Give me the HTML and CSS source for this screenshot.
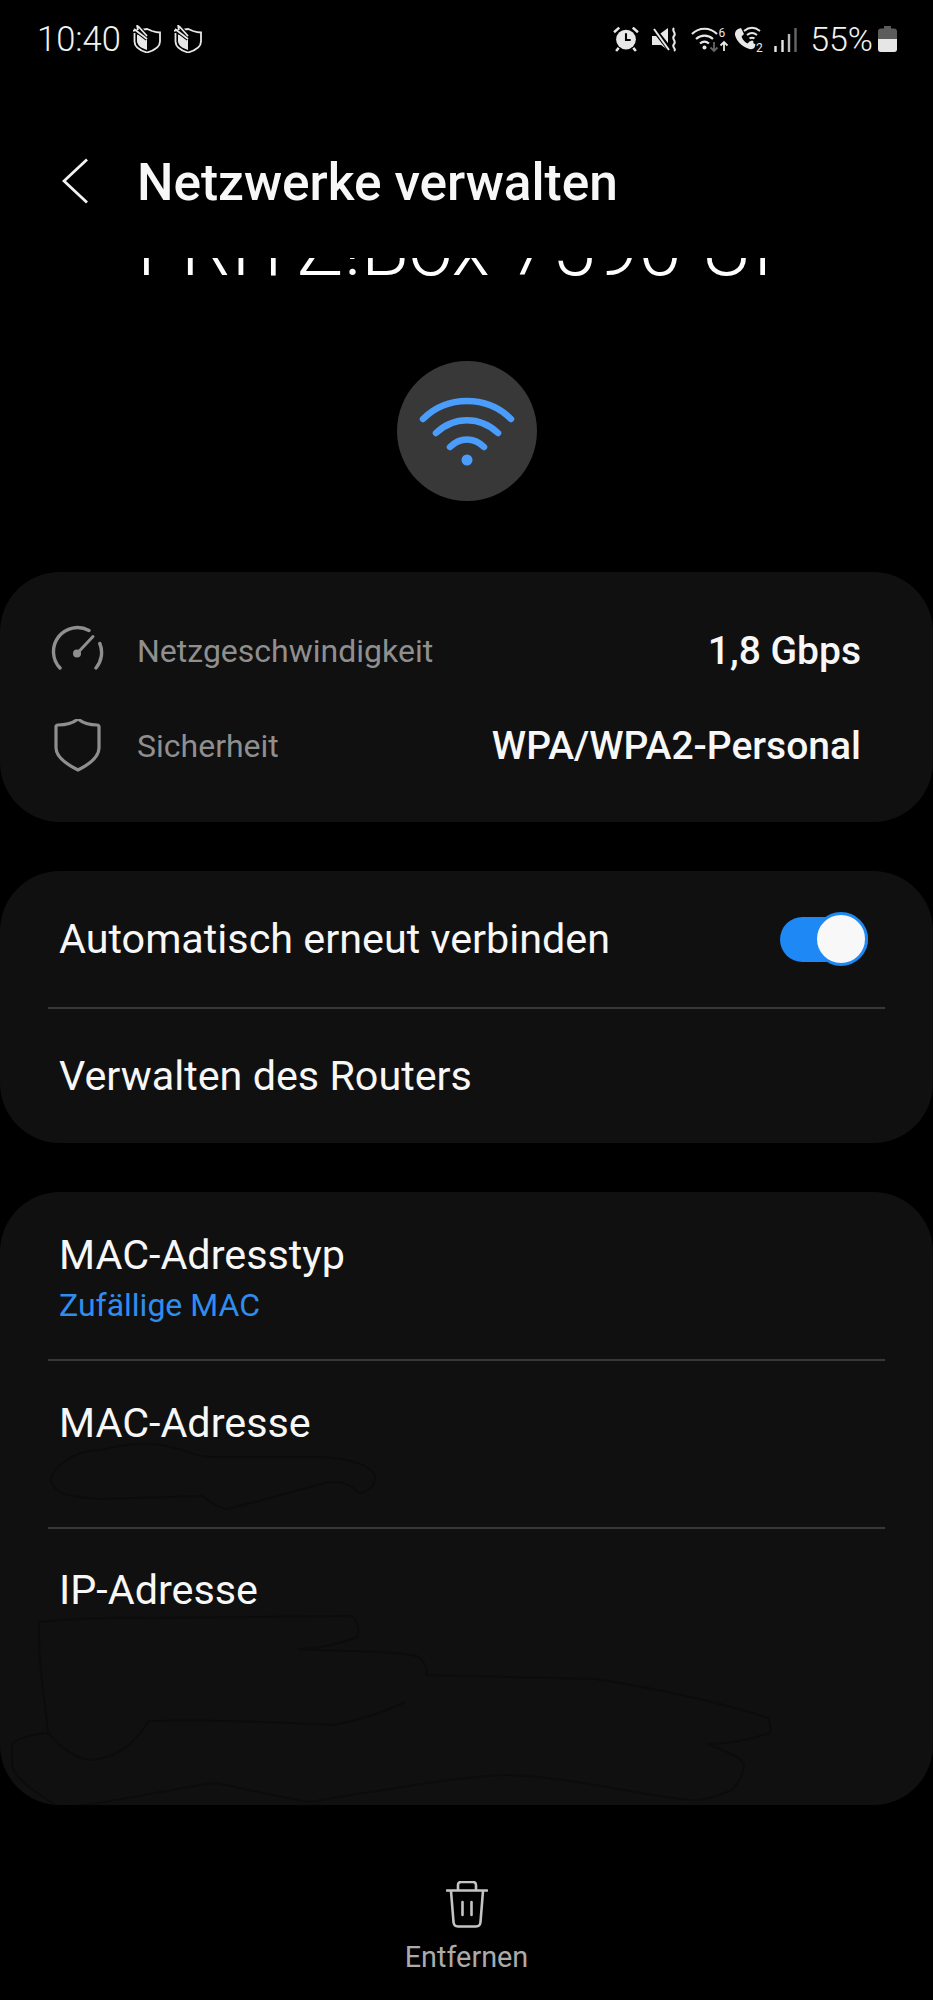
FILE: index.html
```html
<!DOCTYPE html>
<html lang="de">
<head>
<meta charset="utf-8">
<title>Netzwerke verwalten</title>
<link rel="stylesheet" href="styles.css">
</head>
<body>
<div class="phone">
  <header class="status">
    <div class="status-left">
      <span class="clock">10:40</span>
      <svg class="ic-shield" viewBox="0 0 28 28"><use href="#guard"/></svg>
      <svg class="ic-shield" viewBox="0 0 28 28"><use href="#guard"/></svg>
    </div>
    <div class="status-right">
      <svg class="ic-alarm" viewBox="0 0 25 25">
        <circle cx="12.5" cy="13" r="9.5" fill="#e8e8e8"/>
        <path d="M12.5 7v6.500h4.500" fill="none" stroke="#000" stroke-width="2"/>
        <path d="M1 6l5-4.500M24 6l-5-4.500M5.500 21l-2.500 3M19.500 21l2.500 3" stroke="#e8e8e8" stroke-width="2.400" fill="none"/>
      </svg>
      <svg class="ic-mute" viewBox="0 0 26 25">
        <path d="M0 9h5l11-8v22l-7-5H0z" fill="#e8e8e8"/>
        <path d="M1 1l18 23" stroke="#000" stroke-width="5"/>
        <path d="M2 2l15 21" stroke="#e8e8e8" stroke-width="2"/>
        <path d="M22 1c-3 3 3 5 0 8s3 5 0 8 3 5 0 7" fill="none" stroke="#e8e8e8" stroke-width="2"/>
      </svg>
      <svg class="ic-wifi" viewBox="0 0 37 27">
        <path d="M1 8c7-7 18-7 25 0M5 13c5-4.500 12-4.500 17 0M9 17.500c3-2.500 6-2.500 9 0" fill="none" stroke="#e8e8e8" stroke-width="2.200"/>
        <circle cx="13.500" cy="21.500" r="2" fill="#e8e8e8"/>
        <path d="M23 16v9m-3.500-3.500l3.500 3.500 3.500-3.500" fill="none" stroke="#666" stroke-width="1.800"/>
        <text x="27.500" y="11" class="ic-num">6</text>
        <path d="M33 25v-9m-3.500 3.500l3.500-3.500 3.500 3.500" fill="none" stroke="#e8e8e8" stroke-width="1.800"/>
      </svg>
      <svg class="ic-call" viewBox="0 0 32 27">
        <path d="M5 3l3-1 3 6-2.500 2.500c1 3 3 5.500 6 7l2.500-2.500 5.500 3.500-1 3c-1 1.500-3 2-5 1.500C9 21 3.500 15 2 9c-.5-2.500 1-5 3-6z" fill="#e8e8e8"/>
        <path d="M11 5c5-4 11-4 16 0M14 9c3-2.500 7-2.500 10 0M16.500 12.500c1.500-1 3.500-1 5 0" fill="none" stroke="#e8e8e8" stroke-width="2"/>
        <circle cx="19" cy="16" r="1.500" fill="#e8e8e8"/>
        <text x="23" y="25.500" class="ic-num">2</text>
      </svg>
      <svg class="ic-signal" viewBox="0 0 23 25">
        <path d="M1.500 19v6M8.500 13v12" stroke="#e8e8e8" stroke-width="2.400"/>
        <path d="M15 7v18" stroke="#bbb" stroke-width="2.400"/>
        <path d="M21.500 1v24" stroke="#666" stroke-width="2.400"/>
      </svg>
      <span class="battery-pct">55%</span>
      <svg class="ic-battery" viewBox="0 0 19 26">
        <path d="M6 0h7v2.500h3a3 3 0 0 1 3 3V23a3 3 0 0 1-3 3H3a3 3 0 0 1-3-3V5.500a3 3 0 0 1 3-3h3z" fill="#5c5c5c"/>
        <path d="M0 13h19v10a3 3 0 0 1-3 3H3a3 3 0 0 1-3-3z" fill="#e6e6e6"/>
      </svg>
    </div>
  </header>

  <div class="appbar">
    <svg class="back" viewBox="0 0 26 46"><path d="M25 1.500L2 23l23 21.500" fill="none" stroke="#f2f2f2" stroke-width="2.800"/></svg>
    <h1 class="appbar-title">Netzwerke verwalten</h1>
  </div>

  <div class="scroll-edge">
    <div class="network-name">FRITZ!Box 7590 UI</div>
  </div>

  <div class="wifi-badge">
    <svg class="wifi-glyph" viewBox="0 0 96 70">
      <path d="M4 23C28 -1 68 -1 92 23" />
      <path d="M17 37C35 20 61 20 79 37" />
      <path d="M31 51C41 41 55 41 65 51" />
      <circle cx="48" cy="64" r="5.500"/>
    </svg>
  </div>

  <main class="cards">
    <section class="card card-info">
      <div class="info-row">
        <svg class="info-icon" viewBox="-2 0 54 54">
          <path d="M8 44A24 24 0 0 1 37 6.500M47.800 19.500A24 24 0 0 1 44 44" fill="none" stroke="#8f8f8f" stroke-width="3.400" stroke-linecap="round"/>
          <path d="M25 29.500L41 12.500" stroke="#8f8f8f" stroke-width="3" stroke-linecap="round"/>
          <circle cx="25" cy="29.500" r="4" fill="#8f8f8f"/>
        </svg>
        <span class="info-label">Netzgeschwindigkeit</span>
        <span class="info-value">1,8 Gbps</span>
      </div>
      <div class="info-row">
        <svg class="info-icon" viewBox="-1 1 54 54">
          <path d="M27 1c5 4 12 6 19 6 1.500 0 2 .8 2 2v21c0 9-9 16-21 22C15 46 5 39 5 30V9c0-1.200.5-2 2-2 8 0 15-2 20-6z" fill="none" stroke="#8f8f8f" stroke-width="3.200" stroke-linejoin="round"/>
        </svg>
        <span class="info-label">Sicherheit</span>
        <span class="info-value">WPA/WPA2-Personal</span>
      </div>
    </section>

    <section class="card">
      <div class="row row-toggle">
        <span class="row-title">Automatisch erneut verbinden</span>
        <span class="switch"><span class="switch-thumb"></span></span>
      </div>
      <div class="row row-plain">
        <span class="row-title">Verwalten des Routers</span>
      </div>
    </section>

    <section class="card card-details">
      <div class="row row-detail row-first">
        <span class="row-title">MAC-Adresstyp</span>
        <span class="row-sub">Zufällige MAC</span>
      </div>
      <div class="row row-detail row-mac">
        <span class="row-title">MAC-Adresse</span>
      </div>
      <div class="row row-detail row-last">
        <span class="row-title">IP-Adresse</span>
      </div>
      <!-- hand-drawn marker strokes covering the address values -->
      <svg class="scribble" viewBox="0 0 933 613">
        <path d="M51 285C60 268 80 258 101 258 125 252 150 250 167 254 185 258 200 266 214 265L321 265C345 266 372 272 375 285 375 298 362 302 357 300 350 290 335 288 321 292 290 300 250 312 226 317 212 314 206 306 202 304L101 307C85 306 65 304 60 300 53 296 50 290 51 285z"/>
        <path d="M39 430C60 428 100 425 150 426L351 424C358 428 360 440 357 445 340 452 315 457 298 457 340 460 390 458 417 464 425 470 428 478 426 483L595 487C650 495 720 510 768 526 772 535 770 545 768 541 750 548 725 552 708 552 725 560 745 565 744 575 742 585 738 592 732 598 715 605 700 610 690 608 670 606 645 602 625 598 590 592 545 584 506 583 450 585 395 597 357 602L310 610C275 605 240 595 214 591 165 598 105 612 60 616 35 600 12 585 12 571L12 552C20 545 35 542 48 541 44 500 38 470 39 430z"/>
        <path d="M48 541C60 555 75 566 90 568 120 566 135 550 149 529 200 527 270 530 333 533 360 528 385 520 405 510"/>
      </svg>
    </section>
  </main>

  <footer class="actions">
    <svg class="trash" viewBox="0 0 42 47">
      <path d="M1 9.500h40M12 9V4c0-1.800 1-3 3-3h12c2 0 3 1.200 3 3v5M5 10l2.500 31c.2 3 2 4.500 4.500 4.500h18c2.500 0 4.300-1.500 4.500-4.500L37 10M16.500 21v13M25.500 21v13" fill="none" stroke="#c4c4c4" stroke-width="2.600" stroke-linecap="round"/>
    </svg>
    <span class="action-label">Entfernen</span>
  </footer>
</div>

<svg class="defs" width="0" height="0">
  <defs>
    <g id="guard">
      <path d="M8 5l6-1 5 2c3 1 6 1.500 8 1.500v9c0 5-6 9-13 11C7 25.500 1.500 21.500 1.500 16.500V8" fill="none" stroke="#e8e8e8" stroke-width="1.800"/>
      <path d="M14 11v14C9 23.500 4 20.500 4 16V9.500z" fill="#e8e8e8"/>
      <path d="M1 4l13 10M5 1l9 10" fill="none" stroke="#000" stroke-width="4"/>
      <path d="M1 4l13 10M5 1l9 10M0 6l4-1M4 0l1 5" fill="none" stroke="#e8e8e8" stroke-width="1.800"/>
    </g>
  </defs>
</svg>
</body>
</html>
```

FILE: styles.css
```css
* { box-sizing: border-box; }

html, body {
  margin: 0;
  background: #000;
}

body {
  font-family: Roboto, "Noto Sans", sans-serif;
  color: #f7f7f7;
}

.phone {
  width: 933px;
  height: 2000px;
  overflow: hidden;
  display: flex;
  flex-direction: column;
}

.defs { position: absolute; }

/* status bar */
.status {
  height: 80px;
  flex: none;
  display: flex;
  justify-content: space-between;
  align-items: flex-start;
  padding: 24px 36px 0 37px;
}

.status-left,
.status-right {
  display: flex;
  align-items: center;
  height: 30px;
}

.clock {
  font-size: 34.5px;
  font-weight: 300;
  line-height: 30px;
  color: #f2f2f2;
  width: 96px;
}

.ic-shield { width: 28px; height: 28px; margin-right: 13px; }

.ic-alarm { width: 26px; height: 26px; margin-right: 13px; }
.ic-mute { width: 26px; height: 25px; margin-right: 13px; }
.ic-wifi { width: 37px; height: 27px; margin-right: 5px; }
.ic-call { width: 32px; height: 27px; margin-right: 9px; }
.ic-signal { width: 23px; height: 25px; margin-right: 13px; }
.ic-battery { width: 19px; height: 26px; margin-left: 5px; }

.ic-num {
  font-size: 12px;
  fill: #e8e8e8;
  font-family: Roboto, sans-serif;
}

.battery-pct {
  font-size: 34px;
  font-weight: 300;
  line-height: 30px;
  color: #f2f2f2;
}

/* app bar */
.appbar {
  height: 96px;
  flex: none;
  margin-top: 55px;
  display: flex;
  align-items: center;
  padding-left: 62px;
}

.back { width: 26px; height: 46px; margin-right: 49px; margin-bottom: 4px; }

.appbar-title {
  margin: 0;
  font-size: 51.4px;
  font-weight: 500;
  line-height: 56px;
  color: #f7f7f7;
}

/* large title scrolled under the app bar */
.scroll-edge {
  height: 30px;
  flex: none;
  margin-top: 27px;
  overflow: hidden;
  display: flex;
  align-items: flex-end;
  padding-left: 137px;
}

.network-name {
  font-size: 78px;
  font-weight: 300;
  line-height: 76px;
  white-space: nowrap;
  margin-bottom: 1px;
  color: #fff;
}

.wifi-badge {
  width: 140px;
  height: 140px;
  flex: none;
  border-radius: 50%;
  background: #383838;
  align-self: center;
  margin-top: 73px;
  display: flex;
  align-items: center;
  justify-content: center;
}

.wifi-glyph {
  width: 96px;
  height: 70px;
  fill: none;
  stroke: #4a9dfb;
  stroke-width: 6.500;
  stroke-linecap: round;
}

.wifi-glyph circle { fill: #4a9dfb; stroke: none; }

/* cards */
.cards {
  display: flex;
  flex-direction: column;
  gap: 49px;
  margin-top: 71px;
}

.card {
  background: #101010;
  border-radius: 60px;
}

.card-info {
  height: 250px;
  padding: 31px 72px 0 50px;
}

.info-row {
  display: flex;
  align-items: center;
  height: 95px;
}

.info-icon { width: 54px; height: 54px; flex: none; margin-right: 33px; }

.info-label {
  font-size: 32px;
  color: #8f8f8f;
  flex: 1;
}

.info-value {
  font-size: 39px;
  font-weight: 500;
  color: #f7f7f7;
}

.row {
  margin: 0 48px;
  padding: 0 11px;
  border-bottom: 2px solid #383838;
  display: flex;
}

.row:last-child,
.row-last { border-bottom: 0; }

.row-title {
  font-size: 41.3px;
  line-height: 46px;
  color: #f7f7f7;
}

.row-toggle {
  height: 138px;
  align-items: center;
  justify-content: space-between;
  padding-right: 17px;
}

.row-plain {
  height: 134px;
  align-items: center;
}

.switch {
  width: 88px;
  height: 45px;
  border-radius: 23px;
  background: #1e88f5;
  display: flex;
  justify-content: flex-end;
  align-items: center;
}

.switch-thumb {
  width: 54px;
  height: 54px;
  border-radius: 50%;
  background: #f8f8f8;
  border: 3px solid #1e88f5;
  flex: none;
}

.card-details {
  height: 613px;
  position: relative;
}

.row-detail {
  flex-direction: column;
  height: 168px;
  padding-top: 38px;
}

.row-first { height: 169px; padding-top: 40px; }
.row-mac { padding-top: 39px; }

.row-sub {
  font-size: 32px;
  line-height: 36px;
  margin-top: 9px;
  color: #2f8df0;
}

.scribble {
  position: absolute;
  left: 0;
  top: 0;
  width: 933px;
  height: 613px;
  fill: none;
  stroke: #0c0c0c;
  stroke-width: 2;
}

/* bottom action */
.actions {
  display: flex;
  flex-direction: column;
  align-items: center;
  margin-top: 76px;
}

.trash { width: 42px; height: 47px; }

.action-label {
  font-size: 28.8px;
  line-height: 34px;
  margin-top: 12px;
  color: #ababab;
}
```
